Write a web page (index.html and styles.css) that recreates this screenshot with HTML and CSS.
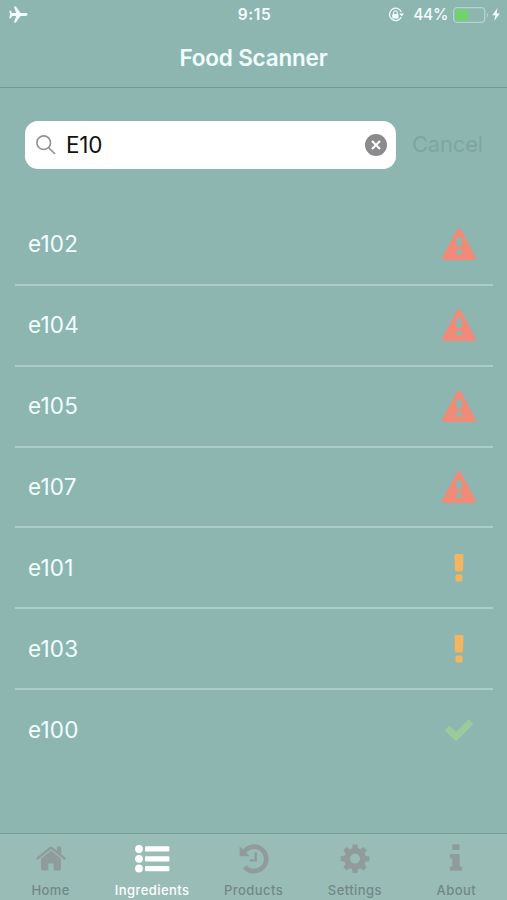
FILE: index.html
```html
<!DOCTYPE html>
<html lang="en">
<head>
  <meta charset="UTF-8" />
  <title>Food Scanner</title>
  <link rel="stylesheet" href="styles.css">
</head>
<body>
  <!-- shared icons -->
  <svg class="icon-defs" width="0" height="0">
    <symbol id="icon-danger" viewBox="0 0 34 32">
      <path fill-rule="evenodd" d="M15.3 1.2Q17 -1 18.7 1.2L33.5 28.6Q34.6 31.8 31.6 32H2.4Q-.6 31.8 .5 28.6ZM14 11.2L14.8 18.8H19.2L20 11.2Q20 9.6 18.4 9.6H15.6Q14 9.6 14 11.2ZM15.4 21.8Q14.3 21.8 14.3 22.6V25.8Q14.3 26.8 15.4 26.8H18.6Q19.7 26.8 19.7 25.8V22.6Q19.7 21.8 18.6 21.8Z" />
    </symbol>
    <symbol id="icon-warning" viewBox="0 0 10 28">
      <path d="M2 0H8Q9.6 0 9.5 1.6L9 16Q8.9 17.5 7.3 17.5H2.7Q1.1 17.5 1 16L.5 1.6Q.4 0 2 0Z" />
      <rect x="1.5" y="20.5" width="7" height="7" rx="1.5" />
    </symbol>
    <symbol id="icon-ok" viewBox="0 0 28 22">
      <path d="M.6 10.4L3.6 7.4Q4.6 6.6 5.5 7.4L11 12.9L22.6 1.2Q23.6 .3 24.5 1.2L27.4 4.1Q28.2 5 27.4 6L12.1 21.2Q11 22.1 10 21.2L.6 12.2Q-.2 11.3 .6 10.4Z" />
    </symbol>
  </svg>

  <header class="header">
    <div class="status-bar">
      <svg class="plane" viewBox="0 0 19 17">
        <path d="M18.6 8.5Q18.4 7.1 16.6 7.1H11.6L6.8 .5H4.9L7.2 7.1H3.3L1.6 4.8H.2L1.1 8.5L.2 12.2H1.6L3.3 9.9H7.2L4.9 16.5H6.8L11.6 9.9H16.6Q18.4 9.9 18.6 8.5Z" />
      </svg>
      <span class="time">9:15</span>
      <div class="status-right">
        <svg class="lock" viewBox="0 0 16 16">
          <path d="M13.2 10.3A6.2 6.2 0 1 1 13.4 4.9" fill="none" stroke="currentColor" stroke-width="1.3" />
          <path d="M11.3 6.6H16L13.6 9.6Z" />
          <rect x="4.3" y="7" width="6.2" height="4.4" rx=".6" />
          <path d="M5.6 7.3V5.6A1.8 1.8 0 0 1 9.2 5.6V7.3" fill="none" stroke="currentColor" stroke-width="1.1" />
        </svg>
        <span class="percent">44%</span>
        <svg class="battery" viewBox="0 0 37 16">
          <rect class="battery-frame" x=".7" y=".7" width="31" height="14.6" rx="3.2" />
          <rect class="battery-level" x="2.3" y="2.4" width="12.7" height="11.2" rx="1.3" />
          <path class="battery-tip" d="M33.8 5.4Q36.2 8 33.8 10.6Z" />
        </svg>
        <svg class="bolt" viewBox="0 0 8 13">
          <path d="M5.6 0L.2 7.2H3.4L2.2 13L7.8 5.4H4.6Z" />
        </svg>
      </div>
    </div>
    <h1>Food Scanner</h1>
  </header>

  <main>
    <div class="search">
      <div class="search-box">
        <svg class="search-icon" viewBox="0 0 20 20">
          <circle cx="7.7" cy="7.7" r="6.8" />
          <path d="M12.6 12.6L19 19" />
        </svg>
        <span class="search-text">E10</span>
        <svg class="clear" viewBox="0 0 22 22">
          <circle cx="11" cy="11" r="11" />
          <path d="M7 7L15 15M15 7L7 15" />
        </svg>
      </div>
      <span class="cancel">Cancel</span>
    </div>

    <ul class="list">
      <li><span>e102</span><svg class="danger"><use href="#icon-danger" /></svg></li>
      <li><span>e104</span><svg class="danger"><use href="#icon-danger" /></svg></li>
      <li><span>e105</span><svg class="danger"><use href="#icon-danger" /></svg></li>
      <li><span>e107</span><svg class="danger"><use href="#icon-danger" /></svg></li>
      <li><span>e101</span><svg class="warning"><use href="#icon-warning" /></svg></li>
      <li><span>e103</span><svg class="warning"><use href="#icon-warning" /></svg></li>
      <li><span>e100</span><svg class="ok"><use href="#icon-ok" /></svg></li>
    </ul>
  </main>

  <nav class="tabs">
    <div class="tab">
      <svg viewBox="0 0 36 30">
        <path d="M18 6.6L28 14.8V25.2Q28 26.6 26.6 26.6H20.7V19.4H15.3V26.6H9.4Q8 26.6 8 25.2V14.8Z" />
        <path d="M3 14.3L16.5 3Q18 1.9 19.5 3L24.1 6.8V3.3Q24.1 2.6 24.8 2.6H27.6Q28.3 2.6 28.3 3.3V10.3L33 14.3L31.5 16L18 4.9L4.5 16Z" />
      </svg>
      <span>Home</span>
    </div>
    <div class="tab active">
      <svg viewBox="0 0 36 30">
        <circle cx="5" cy="5" r="3.9" />
        <circle cx="5" cy="14.8" r="3.9" />
        <circle cx="5" cy="24.5" r="3.9" />
        <rect x="11" y="2.3" width="24.4" height="5.2" rx="1" />
        <rect x="11" y="12.2" width="24.4" height="5.2" rx="1" />
        <rect x="11" y="22" width="24.4" height="5.2" rx="1" />
      </svg>
      <span>Ingredients</span>
    </div>
    <div class="tab">
      <svg viewBox="0 0 36 30">
        <path class="line" d="M8 8A12.2 12.2 0 1 1 8.8 22.9" stroke-width="4.7" />
        <path d="M3.6 2V11.2Q3.6 12.2 4.6 12.2H13.7Z" />
        <path class="line" d="M19.7 8.5V16.4H14" stroke-width="2.4" />
      </svg>
      <span>Products</span>
    </div>
    <div class="tab">
      <svg viewBox="0 0 36 30">
        <path fill-rule="evenodd" d="M15.7 .5H20.3L21 4.3L23.2 5.2L26.5 3L29.7 6.2L27.5 9.5L28.4 11.7L32.3 12.4V17L28.4 17.7L27.5 19.9L29.7 23.2L26.5 26.4L23.2 24.2L21 25.1L20.3 29H15.7L15 25.1L12.8 24.2L9.5 26.4L6.3 23.2L8.5 19.9L7.6 17.7L3.7 17V12.4L7.6 11.7L8.5 9.5L6.3 6.2L9.5 3L12.8 5.2L15 4.3ZM18 9.7A5 5 0 1 0 18 19.7A5 5 0 1 0 18 9.7Z" />
      </svg>
      <span>Settings</span>
    </div>
    <div class="tab">
      <svg viewBox="0 0 36 30">
        <rect x="14.2" y=".3" width="7.4" height="5.6" rx="1" />
        <path d="M13 10H20.6Q21.8 10 21.8 11.2V22.4H23Q24.2 22.4 24.2 23.6V25.6Q24.2 26.8 23 26.8H13Q11.8 26.8 11.8 25.6V23.6Q11.8 22.4 13 22.4H14.3V14.4H13Q11.8 14.4 11.8 13.2V11.2Q11.8 10 13 10Z" />
      </svg>
      <span>About</span>
    </div>
  </nav>
</body>
</html>
```
FILE: styles.css
```css
* {
  box-sizing: border-box;
}

body {
  margin: 0;
  height: 900px;
  display: flex;
  flex-direction: column;
  overflow: hidden;
  font-family: Inter, 'Liberation Sans', sans-serif;
  background: #8db6b1;
  color: #f2ffff;
}

svg {
  fill: currentColor;
  flex: none;
}

.icon-defs {
  display: none;
}

.header {
  height: 88px;
  border-bottom: 1px solid #719b96;
}

.status-bar {
  height: 29px;
  padding: 0 7px 0 9px;
  display: grid;
  grid-template-columns: 1fr auto 1fr;
  align-items: center;
  font-size: 15.5px;
}

.plane {
  width: 19px;
  height: 17px;
}

.time {
  font-weight: 600;
  letter-spacing: 0.6px;
}

.status-right {
  display: flex;
  align-items: center;
  justify-content: flex-end;
}

.lock {
  width: 16px;
  height: 16px;
  margin-right: 9px;
}

.percent {
  font-weight: 500;
  margin-right: 5px;
  letter-spacing: -0.3px;
}

.battery {
  width: 37px;
  height: 16px;
}

.battery-frame {
  fill: none;
  stroke: #b4d3cf;
  stroke-width: 1.3;
}

.battery-level {
  fill: #70d36b;
}

.battery-tip {
  fill: #b4d3cf;
}

.bolt {
  width: 8px;
  height: 13px;
  margin-left: 2px;
}

h1 {
  margin: 14px 0 0;
  font-size: 22.5px;
  line-height: 30px;
  font-weight: 600;
  letter-spacing: -0.2px;
  text-align: center;
}

main {
  flex: 1;
}

.search {
  display: flex;
  align-items: center;
  padding: 33px 25px 0;
}

.search-box {
  flex: none;
  width: 371px;
  height: 48px;
  padding: 0 9px 0 11px;
  display: flex;
  align-items: center;
  border-radius: 13px;
  background: #fff;
}

.search-icon {
  width: 20px;
  height: 20px;
  fill: none;
  stroke: #929294;
  stroke-width: 1.6;
}

.search-text {
  flex: 1;
  margin: 0 0 2px 10px;
  color: #111;
  font-size: 22.5px;
  letter-spacing: -0.2px;
}

.clear {
  width: 22px;
  height: 22px;
  fill: #8b8b8e;
}

.clear path {
  stroke: #fff;
  stroke-width: 2.2;
}

.cancel {
  margin: 0 0 2px 16px;
  font-size: 22px;
  letter-spacing: -0.2px;
  color: #7fa5a0;
}

.list {
  list-style: none;
  margin: 36px 14px 0 15px;
  padding: 0;
}

.list li {
  height: 80.85px;
  padding: 0 13px;
  display: flex;
  align-items: center;
  justify-content: space-between;
  border-bottom: 2px solid #acceca;
  font-size: 22.5px;
}

.list span {
  margin-bottom: 1px;
  letter-spacing: 0.15px;
}

.list li:last-child {
  border-bottom: none;
}

.danger {
  width: 34px;
  height: 32px;
  margin-right: 4px;
  color: #f28a78;
}

.warning {
  width: 10px;
  height: 28px;
  margin-right: 16px;
  color: #f5b55f;
}

.ok {
  width: 28px;
  height: 22px;
  margin-right: 7px;
  color: #9bcb9c;
}

.tabs {
  height: 67px;
  display: flex;
  border-top: 1px solid #779f9a;
  background: #99bcb7;
}

.tab {
  flex: 1;
  display: flex;
  flex-direction: column;
  align-items: center;
  padding-top: 10px;
  color: #8f9c9a;
  font-size: 13px;
  font-weight: 500;
}

.tab svg {
  width: 36px;
  height: 30px;
}

.tab span {
  margin-top: 8px;
  line-height: 16px;
  letter-spacing: 0.45px;
  color: #718984;
}

.tab .line {
  fill: none;
  stroke: currentColor;
}

.tab.active,
.tab.active span {
  color: #fff;
}
```
